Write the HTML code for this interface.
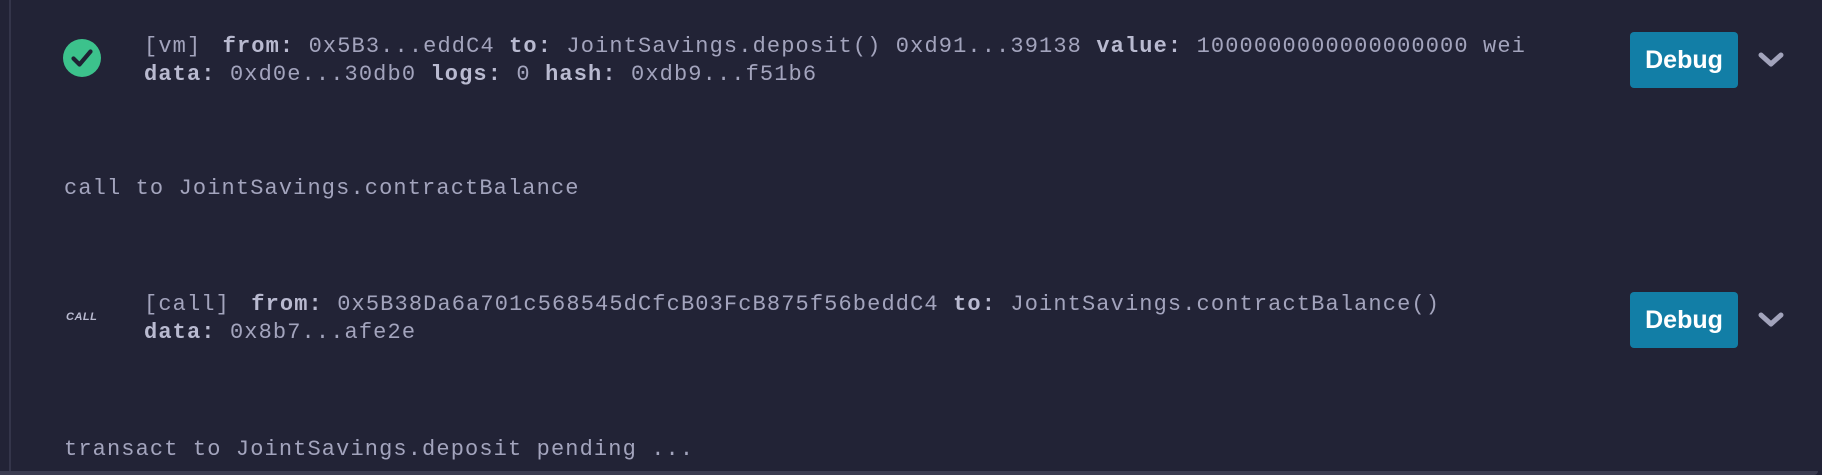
<!DOCTYPE html>
<html><head><meta charset="utf-8"><style>
html,body{margin:0;padding:0;width:1822px;height:475px;overflow:hidden;background:#222336;}
.wrap{position:absolute;left:0;top:0;width:1822px;height:475px;}
.lb{position:absolute;left:9px;top:0;width:2px;height:473px;background:#34354a;}
.bb{position:absolute;left:0;top:471px;width:1818px;height:4px;background:#3b3c50;border-bottom-right-radius:6px;}
.t{position:absolute;font-family:"Liberation Mono",monospace;font-size:22px;letter-spacing:1.12px;color:#a3a4bd;white-space:pre;line-height:28px;}
.t b{color:#b9bad0;font-weight:bold;}
.g{margin-left:7px;}
.btn{position:absolute;left:1630px;width:108px;height:56px;background:#127ea6;border-radius:4px;color:#fff;font-family:"Liberation Sans",sans-serif;font-weight:bold;font-size:25px;text-align:center;line-height:56px;}
.chev{position:absolute;left:1757px;}
</style></head><body><div class="wrap">
<div class="lb"></div><div class="bb"></div>
<svg style="position:absolute;left:63px;top:39px" width="38" height="38"><circle cx="19" cy="19" r="19" fill="#3cc28c"/><path d="M10.5 19.5 L16.5 25.5 L27.5 12.5" stroke="#1f2233" stroke-width="4.2" fill="none" stroke-linecap="round" stroke-linejoin="round"/></svg>
<div class="t" style="left:144px;top:33px">[vm] <b class="g">from:</b> 0x5B3...eddC4 <b>to:</b> JointSavings.deposit() 0xd91...39138 <b>value:</b> 1000000000000000000 wei
<b>data:</b> 0xd0e...30db0 <b>logs:</b> 0 <b>hash:</b> 0xdb9...f51b6</div>
<div class="t" style="left:64px;top:175px">call to JointSavings.contractBalance</div>
<div style="position:absolute;left:66px;top:311px;font-family:'Liberation Sans',sans-serif;font-style:italic;font-weight:bold;font-size:11px;color:#b9bad0;letter-spacing:0.5px">CALL</div>
<div class="t" style="left:144px;top:291px">[call] <b class="g">from:</b> 0x5B38Da6a701c568545dCfcB03FcB875f56beddC4 <b>to:</b> JointSavings.contractBalance()
<b>data:</b> 0x8b7...afe2e</div>
<div class="t" style="left:64px;top:436px">transact to JointSavings.deposit pending ...</div>
<div class="btn" style="top:32px">Debug</div>
<div class="btn" style="top:292px">Debug</div>
<svg class="chev" style="top:50px" width="28" height="20"><path d="M4 5 L14 14 L24 5" stroke="#a2a3bb" stroke-width="5" fill="none" stroke-linecap="round" stroke-linejoin="round"/></svg>
<svg class="chev" style="top:310px" width="28" height="20"><path d="M4 5 L14 14 L24 5" stroke="#a2a3bb" stroke-width="5" fill="none" stroke-linecap="round" stroke-linejoin="round"/></svg>
</div></body></html>
